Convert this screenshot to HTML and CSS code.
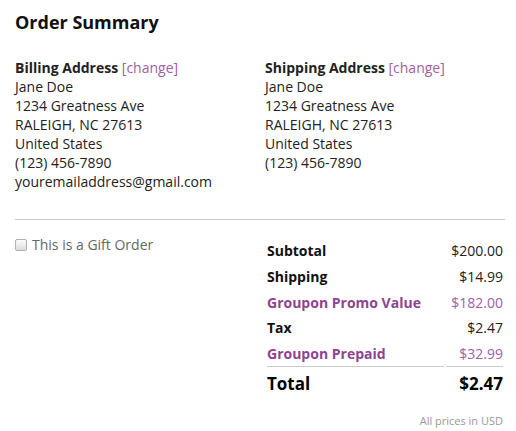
FILE: index.html
```html
<!DOCTYPE html>
<html>
<head>
<meta charset="utf-8">
<link rel="stylesheet" href="styles.css">
</head>
<body>
<div class="summary">
  <h2 class="title">Order Summary</h2>
  <div class="addresses">
    <div class="address">
      <div><span class="addr-head">Billing Address</span> <a class="change" href="#">[change]</a></div>
      <div>Jane Doe</div>
      <div>1234 Greatness Ave</div>
      <div>RALEIGH, NC 27613</div>
      <div>United States</div>
      <div>(123) 456-7890</div>
      <div>youremailaddress@gmail.com</div>
    </div>
    <div class="address">
      <div><span class="addr-head">Shipping Address</span> <a class="change" href="#">[change]</a></div>
      <div>Jane Doe</div>
      <div>1234 Greatness Ave</div>
      <div>RALEIGH, NC 27613</div>
      <div>United States</div>
      <div>(123) 456-7890</div>
    </div>
  </div>
  <hr class="divider">
  <div class="bottom">
    <label class="gift"><span class="box"></span>This is a Gift Order</label>
    <div class="totals-wrap">
      <table class="totals">
        <tr><td class="label">Subtotal</td><td class="value">$200.00</td></tr>
        <tr><td class="label">Shipping</td><td class="value">$14.99</td></tr>
        <tr class="promo"><td class="label">Groupon Promo Value</td><td class="value">$182.00</td></tr>
        <tr><td class="label">Tax</td><td class="value">$2.47</td></tr>
        <tr class="promo last"><td class="label">Groupon Prepaid</td><td class="value">$32.99</td></tr>
        <tr class="total"><td class="label">Total</td><td class="value">$2.47</td></tr>
      </table>
      <div class="note">All prices in USD</div>
    </div>
  </div>
</div>
</body>
</html>
```

FILE: styles.css
```css
html, body {
  margin: 0;
  padding: 0;
  background: #fff;
}
body {
  font-family: "Open Sans", "Liberation Sans", sans-serif;
  font-size: 14px;
  color: #222;
}
.summary {
  padding: 9px 11px 0 15px;
}
.title {
  margin: 0;
  font-size: 18px;
  font-weight: 700;
  line-height: 27px;
  color: #111;
}
.addresses {
  display: grid;
  grid-template-columns: 250px 1fr;
  margin-top: 22px;
  line-height: 19px;
}
.addr-head {
  font-weight: 700;
}
.change {
  color: #a060a2;
  text-decoration: none;
}
.divider {
  border: 0;
  border-top: 1px solid #ccc;
  margin: 28px 0 0 0;
  height: 0;
}
.bottom {
  display: grid;
  grid-template-columns: 250px 1fr;
  margin-top: 15px;
}
.gift {
  display: flex;
  align-items: center;
  gap: 5px;
  color: #666;
  line-height: 19px;
  height: 19px;
}
.box {
  width: 10px;
  height: 10px;
  border: 1px solid #b0b0b0;
  border-radius: 2px;
  background: linear-gradient(#fdfdfd, #dcdcdc);
}
.totals-wrap {
  padding-top: 4px;
}
.totals {
  width: 100%;
  border-collapse: separate;
  border-spacing: 2px 2px;
  margin-top: -2px;
}
.totals td {
  padding: 2px 0;
  line-height: 19.8px;
}
.label {
  font-weight: 700;
  color: #111;
}
.value {
  text-align: right;
  width: 57px;
  color: #222;
}
.promo .label {
  color: #8e4490;
}
.promo .value {
  color: #a060a2;
}
.last td {
  border-bottom: 1px solid #ccc;
}
.total td {
  font-size: 17px;
  font-weight: 700;
  line-height: 24px;
  padding-top: 3px;
  color: #000;
}
.note {
  text-align: right;
  font-size: 11px;
  color: #999;
  margin-top: 13px;
  padding-right: 2px;
}
```
